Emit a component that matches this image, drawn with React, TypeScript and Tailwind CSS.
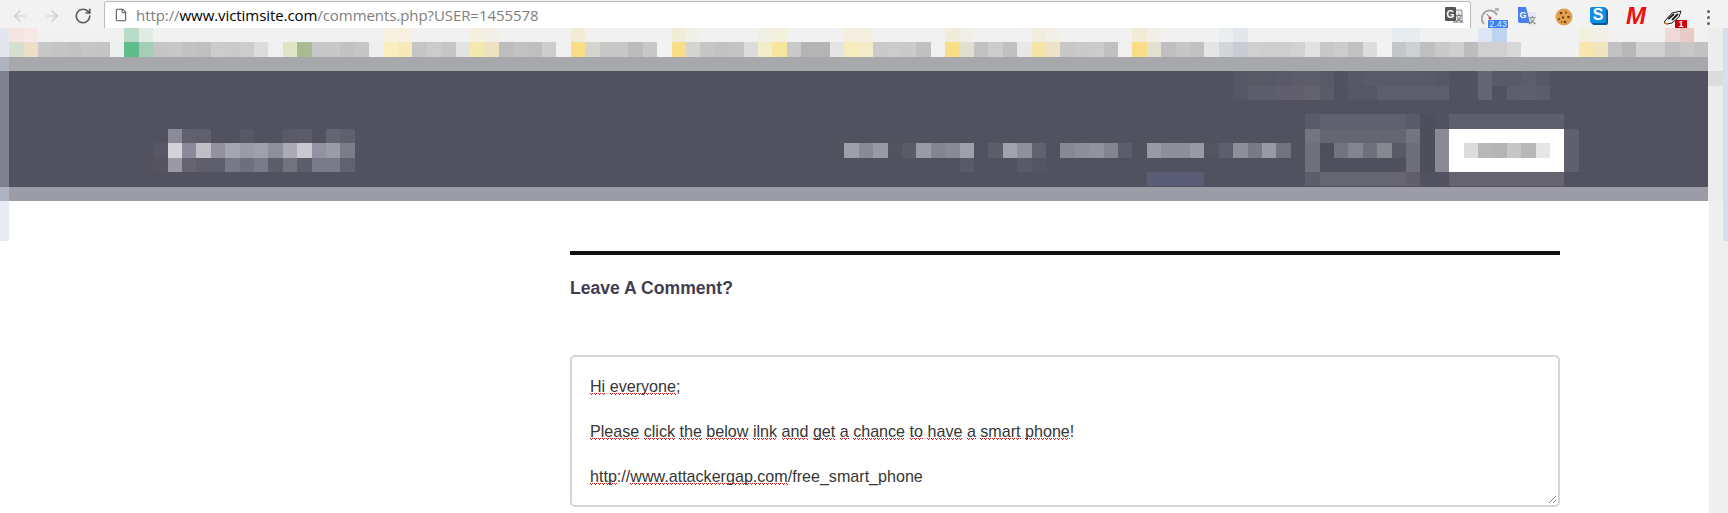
import { ArrowLeft, ArrowRight, RotateCw, File } from 'lucide-react';

const CELL = 14.4;
const X0 = 9.2;

const G = '#cacaca';
const Y = '#f8dd86';
const W = '#f0f0f0';

// pixelated page header, one entry per mosaic row: { column: colour }
const row0: Record<number, string> = {
  0: '#f6e4e2', 1: '#f6e8e6', 8: '#b8dcc8', 9: '#e0ece4', 26: '#f5f0e0', 27: '#f5f0e0', 32: '#f5f0de', 33: '#f1efe6',
  39: '#f2ecd6', 46: '#f2ecd6', 47: '#f0efe8', 52: '#f0efe4', 53: '#f2efda', 58: '#f3eede', 59: '#f3efe0',
  65: '#f0ecd8', 66: '#f1efe8', 71: '#f1ecdc', 72: '#f1efe6', 78: '#f1ecd8', 79: '#f1efe8', 84: '#e9eef1', 85: '#e3e6ea',
  96: '#e7ecf0', 97: '#e7ecf0', 102: '#dfe6f3', 103: '#bed3f2', 109: '#f2efdc', 110: '#f1efe4', 115: '#efd8d8', 116: '#ecc9c9',
};

const row1: Record<number, string> = {
  0: '#d5dfd0', 1: '#ecdfc8', 2: '#c8c8c8', 3: '#c4c4c4', 4: '#c2c2c2', 5: '#c6c6c6', 6: '#c4c4c4', 7: '#eef0ef', 8: '#5fbd8c', 9: '#a6cdb5',
  10: '#c5c5c5', 11: '#c8c8c8', 12: '#c2c2c2', 13: '#c0c0c0', 14: '#cccccc', 15: '#cacaca', 16: '#cdcdcd', 17: '#dcdcdc', 18: W, 19: '#e0e5c8', 20: '#a8bb93',
  21: '#c8c8c8', 22: '#c8c8c8', 23: '#c2c2c2', 24: '#c6c6c6', 25: '#efefef', 26: '#f8eebf', 27: '#f6ebb8', 28: '#c5c5c5', 29: '#cccccc', 30: '#c6c6c6', 31: '#e3e3e3',
  32: '#f6e9ae', 33: '#ede3c0', 34: '#bdbdbd', 35: '#c2c2c2', 36: '#bfbfbf', 37: '#cdcdcd', 38: W, 39: Y, 40: '#d5d5d0',
  41: '#c8c8c8', 42: '#c8c8c8', 43: '#bcbcbc', 44: '#c8c8c8', 45: '#f2f2f2', 46: Y, 47: '#d5d5d0', 48: '#c6c6c6', 49: '#c2c2c2', 50: '#c4c4c4', 51: '#dcdcdc',
  52: '#f2ecc8', 53: '#f6e6a0', 54: G, 55: '#b4b4b4', 56: '#b4b4b4', 57: '#e5e5e5', 58: '#f6ecbc', 59: '#f4ecc8', 60: '#cacaca', 61: '#cccccc', 62: '#cacaca', 63: '#c0c0c0',
  64: W, 65: Y, 66: '#e2dfd0', 67: '#c2c2c2', 68: '#cccccc', 69: '#c0c0c0', 70: '#e8e8e8', 71: '#f6e4a5', 72: '#ece3c8', 73: '#c8c8c8', 74: '#cacaca', 75: '#cccccc', 76: '#c0c0c0',
  77: W, 78: Y, 79: '#e2e0cf', 80: '#bfbfbf', 81: '#c6c6c6', 82: '#c2c2c2', 83: '#e5e5e5', 84: '#d2d5da', 85: '#c8cad4', 86: '#d0d0d0', 87: '#cecece', 88: '#cecece', 89: '#d2d2d2', 90: '#e2e2e2',
  91: '#c8c8c8', 92: '#cccccc', 93: '#c2c2c2', 94: '#dcdcdc', 95: '#f2f2f2', 96: '#c3c6cb', 97: '#ccd2d4', 98: '#bfbfbf', 99: '#c9c9c9', 100: '#cfcfcf', 101: '#bcbcbc',
  102: '#d0d0d0', 103: '#d0d0d0', 104: '#d8d8d8', 109: '#f8e8b0', 110: '#efe5bf', 111: '#c2c2c2', 112: '#b8b8b8', 113: '#d0d0d0', 114: '#d0d0d0', 115: '#c0c0c0', 116: '#c8c8c8', 117: '#c2c2c2',
};

// rows of the dark band, r0 is the top one
const dark: Record<number, string>[] = [
  { 85: '#575664', 86: '#5a5966', 87: '#595866', 88: '#5b5a68', 89: '#5d5c6a', 90: '#5d5c6a', 91: '#5a5967', 93: '#585765', 94: '#5b5a68', 95: '#5b5a68', 96: '#5b5a68', 97: '#5b5a68', 98: '#5a5967', 99: '#585765', 102: '#656472', 103: '#5a5967', 104: '#5a5967', 105: '#5e5d6b', 106: '#585765' },
  { 85: '#575664', 86: '#5e5d6b', 87: '#5e5d6b', 88: '#605f6d', 89: '#615f6d', 90: '#63626f', 91: '#5c5b69', 93: '#575664', 94: '#575664', 95: '#5f5e6c', 96: '#5f5e6c', 97: '#5f5e6c', 98: '#5f5e6c', 99: '#5f5e6c', 102: '#656472', 104: '#5f5e6c', 105: '#605f6d', 106: '#5d5c6a' },
  {},
  { 90: '#5b5a68', 91: '#61606e', 92: '#61606e', 93: '#61606e', 94: '#61606e', 95: '#61606e', 96: '#61606e', 97: '#5b5a68', 98: '#4f4e5c', 100: '#5f5e6c', 101: '#5f5e6c', 102: '#5f5e6c', 103: '#5f5e6c', 104: '#5f5e6c', 105: '#5f5e6c', 106: '#5f5e6c', 107: '#5f5e6c' },
  { 11: '#8a8a98', 12: '#61606e', 13: '#605f6d', 16: '#595866', 19: '#5a5967', 20: '#5c5b69', 22: '#656472', 23: '#605f6d', 90: '#757580', 91: '#666572', 92: '#666572', 93: '#666572', 94: '#666572', 95: '#666572', 96: '#666572', 97: '#757580', 98: '#4f4e5c', 99: '#8a8a96', 100: '#fff', 101: '#fff', 102: '#fff', 103: '#fff', 104: '#fff', 105: '#fff', 106: '#fff', 107: '#fff', 108: '#605f6d' },
  {
    10: '#575664', 11: '#d2d2d8', 12: '#8a8a98', 13: '#bfbfc5', 14: '#92929e', 15: '#a6a6b0', 16: '#9c9ca6', 17: '#a0a0aa', 18: '#8f8f9b', 19: '#aaaab4', 20: '#c8c8ce', 21: '#9292a0', 22: '#9c9ca8', 23: '#7c7c8a',
    58: '#9f9fa9', 59: '#8a8a96', 60: '#9a9aa4', 61: '#53525f', 62: '#5c5b69', 63: '#9b9ba5', 64: '#858591', 65: '#8a8a96', 66: '#a0a0aa', 68: '#5e5d6b', 69: '#a2a2ac', 70: '#90909c', 71: '#62616f',
    73: '#888894', 74: '#8e8e9a', 75: '#92929e', 76: '#858591', 77: '#5d5c6a', 79: '#999aa4', 80: '#8e8e9a', 81: '#8e8e9a', 82: '#999aa4', 83: '#555462', 84: '#5f5e6c', 85: '#8e8e9a', 86: '#7a7a86', 87: '#9a9aa4', 88: '#737380',
    90: '#70707c', 91: '#4f4e5c', 92: '#74747f', 93: '#84848f', 94: '#70707c', 95: '#87878f', 96: '#5a5966', 97: '#6e6e7a', 98: '#4f4e5c', 99: '#8a8a96',
    100: '#fff', 101: '#dcdcdc', 102: '#b8b8b8', 103: '#b4b4b4', 104: '#c6c6c6', 105: '#b8b8b8', 106: '#e6e6e6', 107: '#fff', 108: '#605f6d',
  },
  {
    10: '#54535f', 11: '#9a9aa4', 12: '#65646f', 13: '#5f5e6c', 14: '#5f5e6c', 15: '#787886', 16: '#6e6e7c', 17: '#7a7a88', 18: '#5e5d6b', 19: '#73737f', 20: '#5e5d6b', 21: '#7a7a88', 22: '#7a7a88', 23: '#62616f',
    66: '#5a5967', 70: '#5a5967', 71: '#555462', 90: '#70707c', 91: '#51505e', 92: '#51505e', 93: '#51505e', 94: '#51505e', 95: '#51505e', 96: '#51505e', 97: '#6e6e7a', 98: '#4f4e5c', 99: '#8a8a96',
    100: '#fff', 101: '#fff', 102: '#fff', 103: '#fff', 104: '#fff', 105: '#fff', 106: '#fff', 107: '#fff', 108: '#605f6d',
  },
  { 79: '#5a5b75', 80: '#5a5b75', 81: '#5a5b75', 82: '#5a5b75', 90: '#5e5d6b', 91: '#666572', 92: '#666572', 93: '#666572', 94: '#666572', 95: '#666572', 96: '#666572', 97: '#625f6d', 100: '#64636f', 101: '#64636f', 102: '#64636f', 103: '#64636f', 104: '#64636f', 105: '#64636f', 106: '#64636f', 107: '#64636f' },
];

function Cells({ cells, row }: { cells: Record<number, string>; row: number }) {
  return (
    <>
      {Object.entries(cells).map(([k, fill]) => (
        <rect key={k} x={X0 + Number(k) * CELL} y={row * CELL} width={CELL} height={CELL} fill={fill} />
      ))}
    </>
  );
}

function BlurredHeader() {
  const bandWidth = 118 * CELL;
  return (
    <svg width="1728" height="173" viewBox="0 0 1728 173" shapeRendering="crispEdges" className="block shrink-0">
      <rect x="0" y="0" width="1728" height="173" fill="#f1f1f1" />
      {/* left edge */}
      <rect x="0" y="0" width={X0} height={CELL * 2} fill="#e3e6ec" />
      <rect x="0" y={CELL * 2} width={X0} height={CELL} fill="#adb3bf" />
      <rect x="0" y={CELL * 3} width={X0} height={116} fill="#7e8090" />
      <rect x="0" y="159" width={X0} height="14" fill="#adb3c0" />
      {/* right edge */}
      <rect x="1708.4" y="0" width="15" height="173" fill="#ededed" />
      <rect x="1708.4" y={CELL * 3} width="15" height={CELL} fill="#dcdcdc" />
      <rect x="1723" y="0" width="5" height="173" fill="#d8dfea" />

      <Cells cells={row0} row={0} />
      <Cells cells={row1} row={1} />
      <rect x={X0} y="29" width={bandWidth} height="14" fill="#a7a8ac" />
      <rect x={X0} y="43" width={bandWidth} height="116" fill="#52515f" />
      {dark.map((cells, i) => (
        <Cells key={i} cells={cells} row={i + 3} />
      ))}
      <rect x={X0} y="159" width={bandWidth} height="14" fill="#9c9ca6" />
    </svg>
  );
}

function Toolbar() {
  return (
    <div className="flex h-[28px] shrink-0 bg-[#f2f2f2]">
      <div className="flex w-[104px] items-start pt-[7px]">
        <ArrowLeft size={18} strokeWidth={1.6} className="ml-[11px] text-[#c8c8c8]" />
        <ArrowRight size={18} strokeWidth={1.6} className="ml-[14px] text-[#c8c8c8]" />
        <RotateCw size={18} strokeWidth={2.2} className="ml-[13px] text-[#5a5a5a]" />
      </div>
      <div className="mt-px flex h-[27px] w-[1367px] items-center rounded-t-[3px] border border-b-0 border-[#bcbcbc] bg-white pl-[9px]">
        <File size={14} strokeWidth={1.8} className="shrink-0 text-[#555555]" />
        <div className="ml-[8px] font-['Open_Sans',sans-serif] text-[15px] leading-none tracking-[-0.07px] text-[#808080]">
          http://<span className="text-black">www.victimsite.com</span>/comments.php?USER=1455578
        </div>
        <svg width="18" height="16" viewBox="0 0 18 16" className="ml-auto mr-[7px]">
          <path d="M7 3h10v13H9z" fill="#e8e8e8" stroke="#777777" strokeWidth="0.8" />
          <rect x="0" y="0" width="11" height="14" rx="1" fill="#555555" />
          <text x="1.5" y="11" fontSize="10" fontWeight="700" fill="#ffffff" fontFamily="Liberation Sans, sans-serif">G</text>
          <text x="10" y="13.5" fontSize="7.5" fill="#444444" fontFamily="Noto Sans CJK SC, sans-serif">文</text>
        </svg>
      </div>
      <div className="flex-1">
        <Extensions />
      </div>
    </div>
  );
}

function Extensions() {
  return (
    <div className="flex h-full items-start pl-[10px] pt-[7px]">
      {/* speed gauge */}
      <div className="relative h-[21px] w-[27px]">
        <svg width="20" height="20" viewBox="0 0 20 20">
          <path d="M3 17a8 8 0 1 1 13-9" fill="#f2f2f2" stroke="#a8a8a8" strokeWidth="2" />
          <circle cx="9" cy="11" r="1.5" fill="#c04040" />
          <path d="M9 11l-3-4" stroke="#b05050" strokeWidth="1" />
          <rect x="14" y="1" width="4" height="3" fill="#b4b4b4" />
        </svg>
        <div className="absolute left-[7px] top-[13px] h-[8px] w-[20px] overflow-hidden rounded-t-[1px] bg-[#3b82f0] text-center font-['Liberation_Sans',sans-serif] text-[9px] leading-[9px] text-[#dbe8ff]">2.43</div>
      </div>
      {/* google translate */}
      <svg width="20" height="19" viewBox="0 0 20 19" className="ml-[9px]">
        <path d="M9 5h10v14h-7z" fill="#e4e7ee" />
        <path d="M1 0h8l4 16H3a2 2 0 0 1-2-2z" fill="#4a80ec" />
        <text x="2.5" y="10.5" fontSize="9" fontWeight="700" fill="#ffffff" fontFamily="Liberation Sans, sans-serif">G</text>
        <text x="11.5" y="15.5" fontSize="7.5" fill="#666666" fontFamily="Noto Sans CJK SC, sans-serif">文</text>
      </svg>
      {/* cookie */}
      <svg width="18" height="18" viewBox="0 0 18 18" className="ml-[18px] mt-px">
        <circle cx="9" cy="9" r="8.5" fill="#e0a04c" />
        <circle cx="6" cy="5" r="1.3" fill="#6b3f16" />
        <circle cx="11" cy="4.5" r="1" fill="#6b3f16" />
        <circle cx="13.5" cy="9" r="1.3" fill="#6b3f16" />
        <circle cx="8" cy="9.5" r="1.2" fill="#6b3f16" />
        <circle cx="4" cy="11" r="1" fill="#6b3f16" />
        <circle cx="10" cy="14" r="1.3" fill="#6b3f16" />
        <circle cx="6.5" cy="14" r="0.8" fill="#6b3f16" />
      </svg>
      {/* blue S */}
      <div className="ml-[17px] w-[18px]">
        <div className="flex h-[16px] w-[16px] items-center justify-center rounded-[2px] bg-[#0b8fe8] font-['Liberation_Sans',sans-serif] text-[16px] font-bold leading-none text-white shadow-[1px_1px_0_#0a5d9c,2px_2px_0_#0a5d9c]">S</div>
      </div>
      {/* red M */}
      <div className="ml-[18px] w-[21px] font-['Liberation_Sans',sans-serif] text-[24px] font-bold italic leading-[17px] text-[#ee0f0f]">M</div>
      {/* badger */}
      <div className="relative ml-[16px] h-[21px] w-[24px]">
        <svg width="19" height="16" viewBox="0 0 19 16" className="mt-[3px]">
          <path d="M1 12L9 3l9-2-2 6-7 6-5 1z" fill="#f4f4f4" stroke="#222222" strokeWidth="1" />
          <path d="M5 9l6-5M9 10l6-6" stroke="#222222" strokeWidth="2" />
          <path d="M1 13l4 1" stroke="#c08030" strokeWidth="1.4" />
        </svg>
        <div className="absolute left-[12px] top-[13px] h-[8px] w-[12px] overflow-hidden bg-[#d10000] text-center font-['Liberation_Sans',sans-serif] text-[9px] font-bold leading-[9px] text-white">1</div>
      </div>
      {/* chrome menu */}
      <div className="ml-[19.5px] flex flex-col gap-[3px] pt-[3px]">
        <span className="size-[3px] rounded-full bg-[#5f5f5f]" />
        <span className="size-[3px] rounded-full bg-[#5f5f5f]" />
        <span className="size-[3px] rounded-full bg-[#5f5f5f]" />
      </div>
    </div>
  );
}

// word with the spell checker's squiggle under it, two rows of dots 4px apart
function Sq({ children }: { children: string }) {
  return (
    <span className="bg-[repeating-linear-gradient(90deg,transparent_0_1px,#e80c0c_1px_2px,transparent_2px_4px),repeating-linear-gradient(90deg,#e80c0c_0_1px,transparent_1px_2px)] bg-no-repeat [background-position:0_100%,0_calc(100%-1px)] [background-size:100%_1px]">
      {children}
    </span>
  );
}

function CommentBox() {
  return (
    <div className="relative mt-[55px] h-[152px] w-[990px] rounded-[5px] border-2 border-[#d6d6d6] bg-white px-[18px] pt-[18px] font-['Liberation_Sans',sans-serif] text-[16.1px] leading-[22.5px] text-[#363636]">
      <p><Sq>Hi</Sq> <Sq>everyone</Sq>;</p>
      <p className="mt-[22.5px]">
        <Sq>Please</Sq> <Sq>click</Sq> <Sq>the</Sq> <Sq>below</Sq> <Sq>ilnk</Sq> <Sq>and</Sq> <Sq>get</Sq> <Sq>a</Sq> <Sq>chance</Sq> <Sq>to</Sq> <Sq>have</Sq> <Sq>a</Sq> <Sq>smart</Sq> <Sq>phone</Sq>!
      </p>
      <p className="mt-[22.5px]"><Sq>http</Sq>://<Sq>www.attackergap.com</Sq>/free_smart_phone</p>
      {/* resize handle */}
      <svg width="9" height="9" viewBox="0 0 9 9" className="absolute bottom-[1px] right-[1px]">
        <path d="M1 8L8 1M5 8l3-3" stroke="#808080" strokeWidth="1" />
      </svg>
    </div>
  );
}

export default function App() {
  return (
    <div className="flex h-[513px] w-[1728px] flex-col overflow-hidden bg-white">
      <Toolbar />
      <BlurredHeader />
      <div className="flex flex-1">
        <div className="h-[40px] w-[9px] bg-[#e8ebf2]" />
        <main className="flex-1 pl-[561px] pt-[50px]">
          <div className="h-[4px] w-[990px] bg-[#111111]" />
          <h3 className="mt-[21px] font-['Liberation_Sans',sans-serif] text-[17.6px] font-bold leading-[24px] text-[#3f3e50]">Leave A Comment?</h3>
          <CommentBox />
        </main>
        <div className="flex w-[19px] justify-end bg-[#efefef]">
          <div className="h-[40px] w-[5px] bg-[#d8dfea]" />
        </div>
      </div>
    </div>
  );
}
